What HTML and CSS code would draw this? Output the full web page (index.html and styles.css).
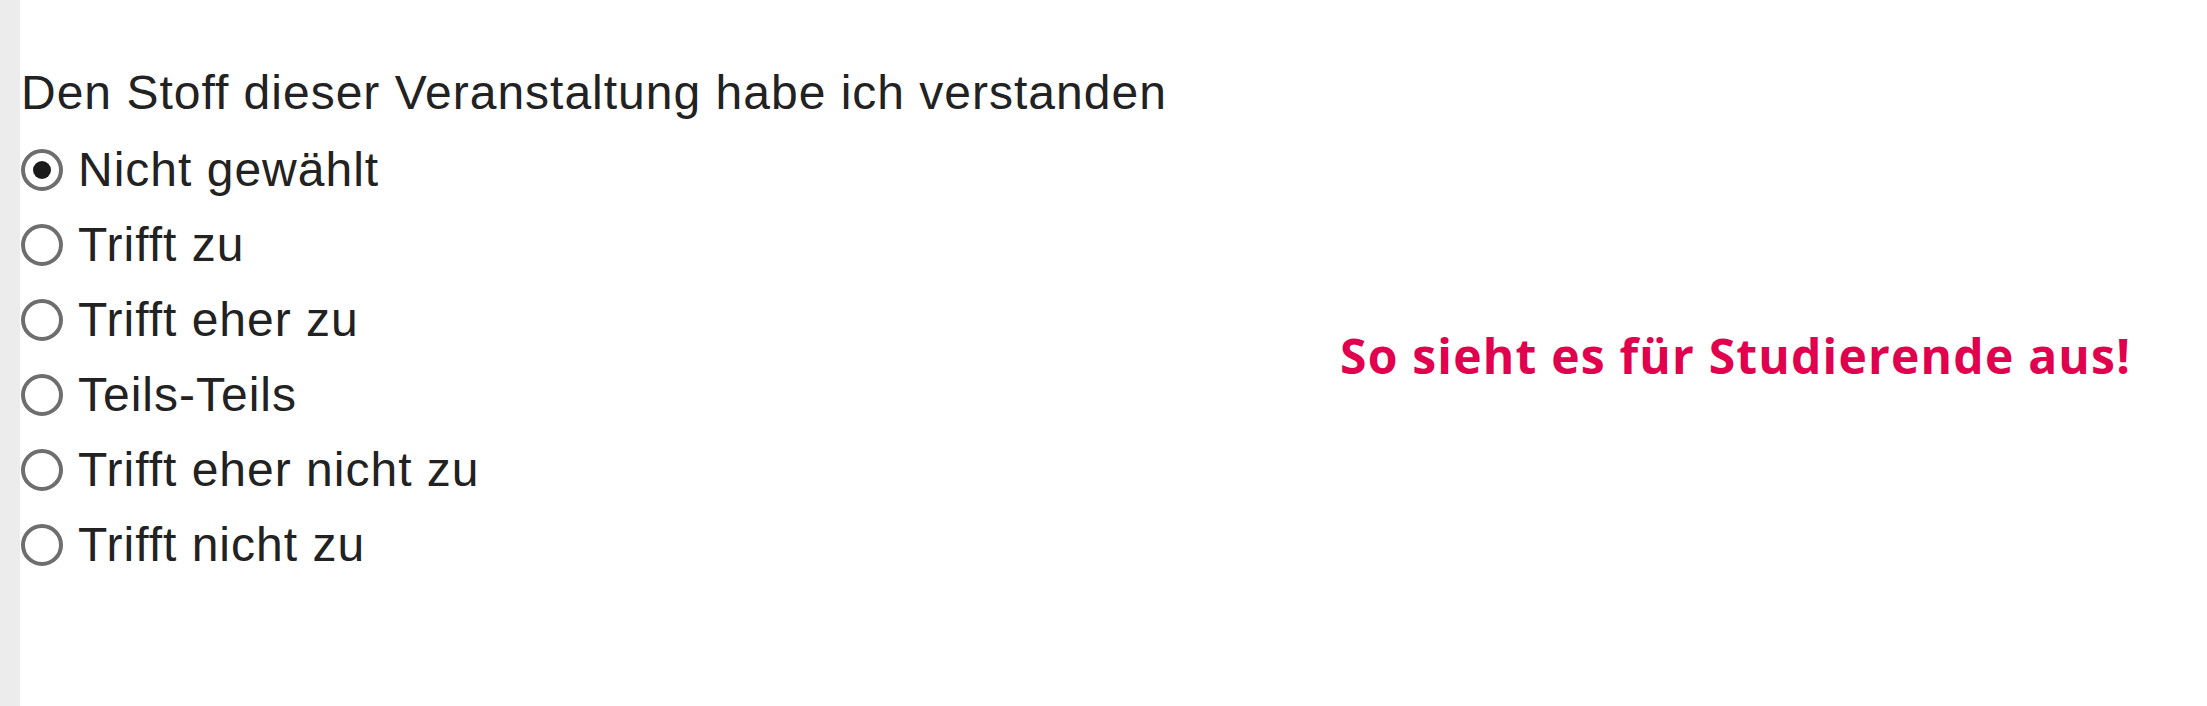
FILE: index.html
```html
<!DOCTYPE html>
<html lang="de">
<head>
    <meta charset="UTF-8">
    <meta name="viewport" content="width=device-width, initial-scale=1.0">
    <title>Umfrage Vorschau</title>
    <link rel="stylesheet" href="styles.css">
</head>
<body>

    <div class="page">
        <div class="side-strip"></div>

        <!-- Frage mit Antwortoptionen -->
        <div class="question">
            <div class="question-title">Den Stoff dieser Veranstaltung habe ich verstanden</div>
            <div class="options">
                <label class="option"><span class="radio checked"></span>Nicht gewählt</label>
                <label class="option"><span class="radio"></span>Trifft zu</label>
                <label class="option"><span class="radio"></span>Trifft eher zu</label>
                <label class="option"><span class="radio"></span>Teils-Teils</label>
                <label class="option"><span class="radio"></span>Trifft eher nicht zu</label>
                <label class="option"><span class="radio"></span>Trifft nicht zu</label>
            </div>
        </div>

        <!-- Hinweis rechts -->
        <div class="note">So sieht es für Studierende aus!</div>
    </div>

</body>
</html>
```

FILE: styles.css
```css
body {
    margin: 0;
    background: #fff;
    font-family: "Liberation Sans", Arial, sans-serif;
}
.page {
    display: flex;
    height: 706px;
}
.side-strip {
    width: 20px;
    background-color: #ececec;
}
.question {
    width: 1298px;
    padding-top: 55px;
    color: #222;
    font-size: 48px;
    letter-spacing: 1px;
}
.question-title {
    line-height: 75px;
    padding-left: 1px;
}
.options {
    margin-top: 2px;
}
.option {
    display: flex;
    align-items: center;
    gap: 15px;
    height: 75px;
    line-height: 75px;
}
.radio {
    position: relative;
    width: 34px;
    height: 34px;
    margin-left: 1px;
    border: 4px solid #6e6e6e;
    border-radius: 50%;
    flex-shrink: 0;
}
.radio.checked::after {
    content: "";
    position: absolute;
    left: 8px;
    top: 8px;
    width: 18px;
    height: 18px;
    border-radius: 50%;
    background: #1a1a1a;
}
.note {
    flex: 1;
    display: flex;
    align-items: center;
    padding-left: 22px;
    padding-top: 4px;
    font-family: "Open Sans", sans-serif;
    font-weight: 700;
    font-size: 48px;
    letter-spacing: 1.2px;
    color: #e0004d;
}
```
